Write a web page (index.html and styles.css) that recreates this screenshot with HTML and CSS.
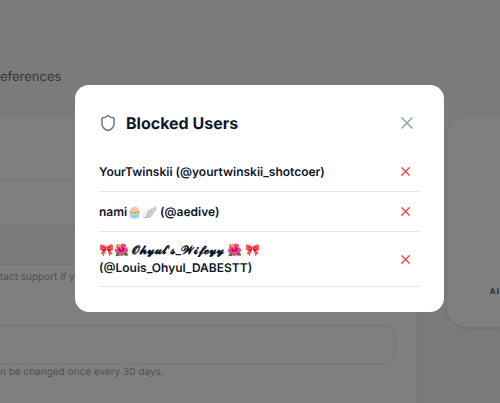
FILE: index.html
```html
<!DOCTYPE html>
<html lang="en">
<head>
<meta charset="utf-8">
<meta name="viewport" content="width=device-width, initial-scale=1">
<title>Blocked Users</title>
<link rel="stylesheet" href="styles.css">
</head>
<body>
<div class="page">
  <nav class="tabs"><a class="tab" href="#preferences">eferences</a></nav>
  <div class="columns">
    <main class="card settings">
      <div class="card-head"></div>
      <div class="fields">
        <div class="field">
          <input class="input input-disabled" type="text" aria-label="Email" disabled>
          <p class="hint">tact support if y</p>
        </div>
        <div class="field">
          <input class="input" type="text" aria-label="Username">
          <p class="hint hint-tight">n be changed once every 30 days.</p>
        </div>
      </div>
    </main>
    <aside class="card side"><span class="side-label">AI</span></aside>
  </div>
</div>
<div class="overlay">
  <section class="modal" role="dialog" aria-modal="true" aria-labelledby="title">
    <header class="modal-head">
      <svg class="shield" viewBox="0 0 24 24" aria-hidden="true"><path d="M20 13c0 5-3.500 7.500-7.660 8.950a1 1 0 0 1-.67-.01C7.500 20.500 4 18 4 13V6a1 1 0 0 1 1-1c2 0 4.500-1.200 6.240-2.720a1.170 1.170 0 0 1 1.520 0C14.510 3.810 17 5 19 5a1 1 0 0 1 1 1z"/></svg>
      <h2 class="title" id="title">Blocked Users</h2>
      <button class="icon-button close" type="button" aria-label="Close"><svg viewBox="0 0 24 24"><path d="M18 6 6 18M6 6l12 12"/></svg></button>
    </header>
    <ul class="users">
      <li class="user">
        <span class="name">YourTwinskii (@yourtwinskii_shotcoer)</span>
        <button class="icon-button remove" type="button" aria-label="Unblock YourTwinskii"><svg viewBox="0 0 24 24"><path d="M18 6 6 18M6 6l12 12"/></svg></button>
      </li>
      <li class="user">
        <span class="name">nami🧁🪽 (@aedive)</span>
        <button class="icon-button remove" type="button" aria-label="Unblock nami"><svg viewBox="0 0 24 24"><path d="M18 6 6 18M6 6l12 12"/></svg></button>
      </li>
      <li class="user">
        <span class="name">🎀🌺 𝓞𝓱𝔂𝓾𝓵'𝓼_𝓦𝓲𝓯𝓮𝔂𝔂 🌺 🎀 (@Louis_Ohyul_DABESTT)</span>
        <button class="icon-button remove" type="button" aria-label="Unblock Ohyul's Wifeyy"><svg viewBox="0 0 24 24"><path d="M18 6 6 18M6 6l12 12"/></svg></button>
      </li>
    </ul>
  </section>
</div>
</body>
</html>
```

FILE: styles.css
```css
* { box-sizing: border-box; }
body {
  margin: 0;
  background: #f6f6f6;
  color: #0f172a;
  font-family: Inter, "Liberation Sans", sans-serif;
  text-rendering: geometricPrecision;
  overflow: hidden;
}
h2, p, ul { margin: 0; padding: 0; }
.page { min-height: 100vh; padding-top: 67px; }
.tab {
  display: block;
  color: #64748b;
  font-size: 13px;
  line-height: 20px;
  text-decoration: none;
}
.columns {
  display: grid;
  grid-template-columns: 1fr 53px;
  align-items: start;
  gap: 30px;
  margin-top: 30px;
}
.card {
  background: #fff;
  box-shadow: 0 1px 3px rgba(0, 0, 0, .12);
}
.settings { min-height: calc(100vh - 117px); }
.card-head { height: 64px; border-bottom: 1px solid #f1f1f1; }
.fields {
  display: grid;
  gap: 40px;
  padding: 44px 21px 24px 0;
}
.input {
  display: block;
  width: 100%;
  height: 40px;
  border: 1px solid #e7e9ec;
  border-left: 0;
  border-radius: 0 14px 14px 0;
  background: #fff;
  font: inherit;
}
.input-disabled { background: #f6f9f8; }
.hint {
  padding-top: 4px;
  color: #94a3b8;
  font-size: 10px;
  line-height: 16px;
}
.hint-tight { padding-top: 0; line-height: 14px; }
.side {
  display: flex;
  align-items: end;
  justify-content: end;
  height: 210px;
  padding-bottom: 30px;
  border-radius: 20px 0 0 20px;
  overflow: hidden;
}
.side-label {
  color: #64748b;
  font-size: 8px;
  font-weight: 800;
  line-height: 12px;
  letter-spacing: 1px;
}
.overlay {
  position: fixed;
  inset: 0;
  display: flex;
  align-items: center;
  justify-content: center;
  padding: 0 56px 6px 75px;
  background: rgba(0, 0, 0, .5);
}
.modal {
  width: 100%;
  max-width: 400px;
  padding: 25px 24px;
  border-radius: 14px;
  background: #fff;
}
.modal-head {
  display: flex;
  align-items: center;
  height: 26px;
  margin-bottom: 16px;
}
svg {
  fill: none;
  stroke: currentColor;
  stroke-width: 2;
  stroke-linecap: round;
  stroke-linejoin: round;
}
.shield { width: 18px; height: 18px; color: #64748b; }
.title {
  flex: 1;
  margin-left: 9px;
  font-size: 16px;
  font-weight: 700;
  line-height: 20px;
}
.icon-button {
  display: grid;
  place-items: center;
  flex: none;
  padding: 0;
  border: 0;
  background: none;
  cursor: pointer;
}
.close { width: 26px; height: 26px; color: #94a3b8; }
.close svg { width: 20px; height: 20px; }
.remove { width: 29px; height: 21px; color: #ef4444; }
.remove svg { width: 15px; height: 15px; }
.users { list-style: none; }
.user {
  display: flex;
  align-items: center;
  justify-content: space-between;
  padding: 9px 0;
  border-bottom: 1px solid #e5e7eb;
}
.name {
  font-size: 12px;
  font-weight: 600;
  line-height: 18px;
}
```
